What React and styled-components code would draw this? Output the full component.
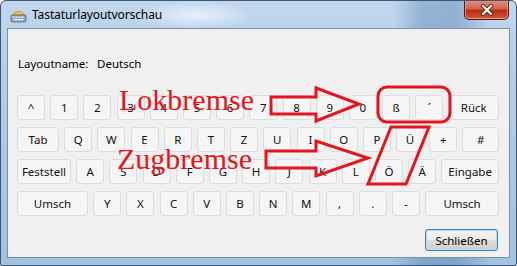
import React from 'react'
import styled, { createGlobalStyle } from 'styled-components'

const GlobalStyle = createGlobalStyle`
  html, body {
    margin: 0;
    padding: 0;
    background: #ffffff;
  }
  body {
    font-family: "Noto Sans", "Open Sans", sans-serif;
  }
`

const Window = styled.div`
  position: relative;
  box-sizing: border-box;
  width: 517px;
  height: 266px;
  display: flex;
  flex-direction: column;
  border: 1px solid #3f5673;
  border-radius: 6px 6px 2px 2px;
  overflow: hidden;
  background:
    radial-gradient(ellipse 60px 14px at 195px 14px, rgba(235, 243, 252, 0.9), rgba(235, 243, 252, 0) 100%),
    linear-gradient(90deg, rgba(0, 0, 0, 0) 0, rgba(0, 0, 0, 0) 392px, rgba(40, 90, 150, 0.28) 420px, rgba(40, 90, 150, 0.3) 455px, rgba(0, 0, 0, 0) 490px),
    linear-gradient(180deg, #c1d7ee 0%, #b3cce9 30%, #a3c1e3 100%);
`

const TitleBar = styled.div`
  height: 27px;
  display: flex;
  align-items: center;
  padding-left: 9px;
  gap: 5px;
  flex-shrink: 0;
`

const Title = styled.span`
  font-family: "Noto Sans", sans-serif;
  font-size: 12px;
  color: #000;
  letter-spacing: -0.1px;
`

const CloseButton = styled.div`
  margin-left: auto;
  margin-right: 7px;
  align-self: flex-start;
  margin-top: -1px;
  width: 45px;
  height: 20px;
  box-sizing: border-box;
  border: 1px solid #4e1f18;
  border-top: none;
  border-radius: 0 0 5px 5px;
  background: linear-gradient(180deg, #e59383 0%, #d2624d 45%, #b52f18 55%, #c9452a 85%, #d86a4c 100%);
  box-shadow: inset 0 0 0 1px rgba(255, 190, 175, 0.5);
  display: flex;
  align-items: center;
  justify-content: center;
`

const Client = styled.div`
  flex: 1;
  margin: 0 6px 7px 6px;
  border: 1px solid #7d8ea3;
  background: #f0f0f0;
  display: flex;
  flex-direction: column;
  padding: 0 10px 0 9px;
  font-size: 11.5px;
  color: #000;
`

const LayoutRow = styled.div`
  display: flex;
  height: 20px;
  align-items: center;
  margin-top: 24px;
  margin-left: 1px;
`

const Label = styled.span`
  width: 79px;
`

const Keyboard = styled.div`
  display: flex;
  flex-direction: column;
  gap: 7px;
  margin-top: 22px;
`

const KeyRow = styled.div`
  display: flex;
  gap: 5.2px;
  height: 25px;
`

const Key = styled.div`
  box-sizing: border-box;
  width: ${(p) => (p.$w ? `${p.$w}px` : '28px')};
  flex: ${(p) => (p.$grow ? '1' : 'none')};
  height: 25px;
  border: 1px solid #dcdcdc;
  border-radius: 3px;
  background: #f5f5f5;
  display: flex;
  align-items: center;
  justify-content: center;
  font-size: 11.5px;
  color: #111;
`

const Footer = styled.div`
  display: flex;
  justify-content: flex-end;
  margin-top: 13px;
  padding-right: 1px;
`

const Button = styled.div`
  box-sizing: border-box;
  width: 73px;
  height: 22px;
  border: 1px solid #3c7fb1;
  border-radius: 3px;
  background: linear-gradient(180deg, #f4f4f4 0%, #ececec 48%, #dcdcdc 52%, #d0d0d0 100%);
  box-shadow: inset 0 0 0 1px #b6dbf3;
  display: flex;
  align-items: center;
  justify-content: center;
  font-size: 11.5px;
  color: #000;
`

const Overlay = styled.svg`
  position: absolute;
  left: 0;
  top: 0;
  width: 517px;
  height: 266px;
  pointer-events: none;
`

const rows = [
  [{ t: '^' }, { t: '1' }, { t: '2' }, { t: '3' }, { t: '4' }, { t: '5' }, { t: '6' }, { t: '7' }, { t: '8' }, { t: '9' }, { t: '0' }, { t: 'ß' }, { t: '´' }, { t: 'Rück', grow: true }],
  [{ t: 'Tab', w: 42 }, { t: 'Q' }, { t: 'W' }, { t: 'E' }, { t: 'R' }, { t: 'T' }, { t: 'Z' }, { t: 'U' }, { t: 'I' }, { t: 'O' }, { t: 'P' }, { t: 'Ü' }, { t: '+' }, { t: '#', grow: true }],
  [{ t: 'Feststell', w: 54 }, { t: 'A' }, { t: 'S' }, { t: 'D' }, { t: 'F' }, { t: 'G' }, { t: 'H' }, { t: 'J' }, { t: 'K' }, { t: 'L' }, { t: 'Ö' }, { t: 'Ä' }, { t: 'Eingabe', grow: true }],
  [{ t: 'Umsch', w: 71 }, { t: 'Y' }, { t: 'X' }, { t: 'C' }, { t: 'V' }, { t: 'B' }, { t: 'N' }, { t: 'M' }, { t: ',' }, { t: '.' }, { t: '-' }, { t: 'Umsch', grow: true }],
]

const KeyboardIcon = () => (
  <svg width="17" height="16" viewBox="0 0 17 16">
    <path d="M3 8 C3 3 14 3 14 8 Z" fill="#f2c23a" stroke="#c8901a" strokeWidth="0.8" />
    <rect x="1" y="8" width="15" height="7" rx="1.2" fill="#8fa6c0" stroke="#4d6482" strokeWidth="0.8" />
    <g fill="#e9f0f8">
      <rect x="2.5" y="9.5" width="2" height="1.3" />
      <rect x="5.5" y="9.5" width="2" height="1.3" />
      <rect x="8.5" y="9.5" width="2" height="1.3" />
      <rect x="11.5" y="9.5" width="2" height="1.3" />
      <rect x="3.5" y="12" width="10" height="1.3" />
    </g>
  </svg>
)

const CloseGlyph = () => (
  <svg width="14" height="12" viewBox="0 0 14 12">
    <path d="M3 2 L11 10 M11 2 L3 10" stroke="#5b241b" strokeWidth="4" strokeLinecap="round" />
    <path d="M3 2 L11 10 M11 2 L3 10" stroke="#ffffff" strokeWidth="2.2" strokeLinecap="round" />
  </svg>
)

const red = '#e3161e'

const Annotations = () => (
  <Overlay viewBox="0 0 517 266">
    <g fill="none" stroke={red} strokeWidth="3" strokeLinejoin="miter">
      <polygon points="270,96 315,96 315,87 358,103 315,120 315,113 270,113" />
      <polygon points="265,150 315,150 315,140 367,157 315,175 315,167 265,167" />
      <rect x="377" y="86" width="72" height="35" rx="9" />
      <polygon points="390,126 428,126 405,183 367,183" />
    </g>
    <g fill={red} fontFamily='"Liberation Serif", "Times New Roman", serif' fontSize="30">
      <text x="118" y="109">Lokbremse</text>
      <text x="116" y="168">Zugbremse</text>
    </g>
  </Overlay>
)

export default function App() {
  return (
    <>
      <GlobalStyle />
      <Window>
        <TitleBar>
          <KeyboardIcon />
          <Title>Tastaturlayoutvorschau</Title>
          <CloseButton>
            <CloseGlyph />
          </CloseButton>
        </TitleBar>
        <Client>
          <LayoutRow>
            <Label>Layoutname:</Label>
            <span>Deutsch</span>
          </LayoutRow>
          <Keyboard>
            {rows.map((row, i) => (
              <KeyRow key={i}>
                {row.map((k, j) => (
                  <Key key={j} $w={k.w} $grow={k.grow}>
                    {k.t}
                  </Key>
                ))}
              </KeyRow>
            ))}
          </Keyboard>
          <Footer>
            <Button>Schließen</Button>
          </Footer>
        </Client>
        <Annotations />
      </Window>
    </>
  )
}
